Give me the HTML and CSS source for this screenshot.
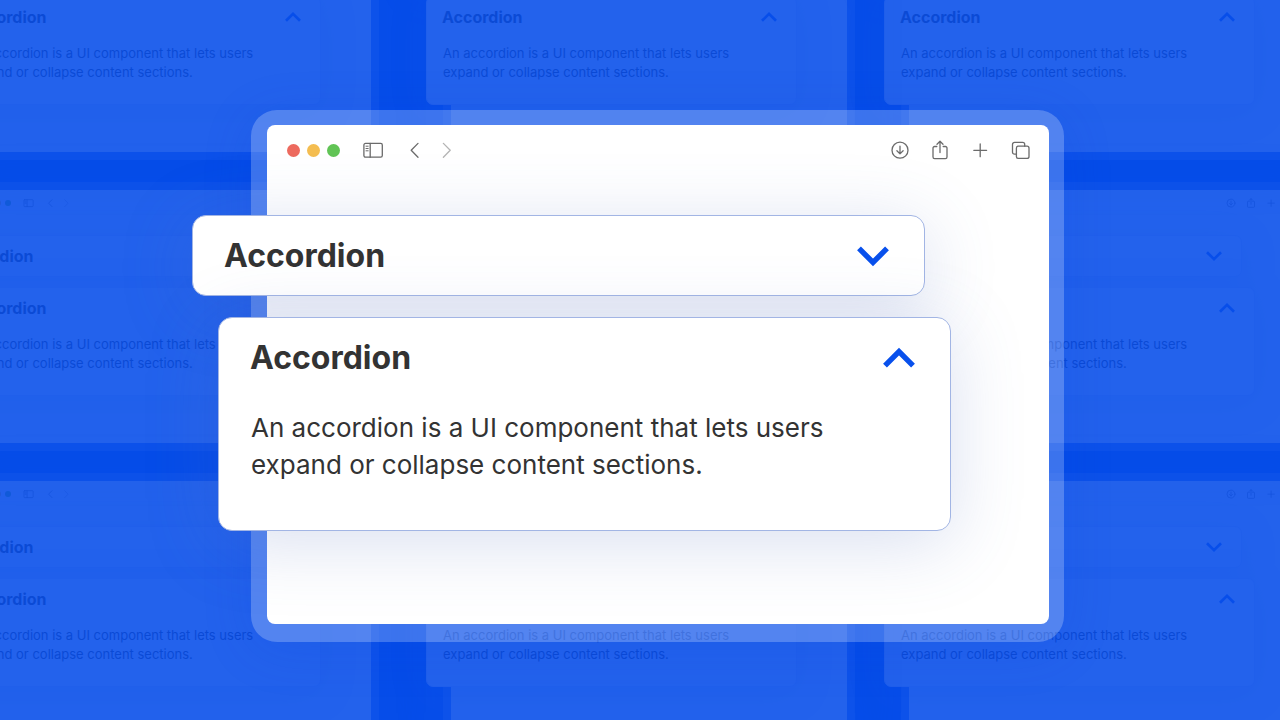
FILE: index.html
```html
<!DOCTYPE html>
<html lang="en">
<head>
  <meta charset="UTF-8" />
  <meta name="viewport" content="width=device-width, initial-scale=1.0"/>
  <title>Accordion</title>
  <link rel="stylesheet" href="styles.css">
</head>
<body>
  <div class="backdrop" id="backdrop" aria-hidden="true" inert></div>

  <main class="stage">
    <div class="frame" id="frame">
      <div class="window">
        <div class="toolbar">
          <div class="lights">
            <span class="light red"></span>
            <span class="light yellow"></span>
            <span class="light green"></span>
          </div>
          <button class="tool" aria-label="Sidebar">
            <svg viewBox="0 0 20 20"><rect x="1.9" y="3.4" width="18.4" height="13.8" rx="1.6"/><path d="M8.2 3.4v13.8"/><path class="thin" d="M4 6.2h2.2M4 8.5h2.2M4 10.8h2.2"/></svg>
          </button>
          <div class="nav">
            <button class="tool" aria-label="Back">
              <svg viewBox="0 0 20 20"><path d="M14 3.4 7.2 10.3l6.8 6.9"/></svg>
            </button>
            <button class="tool faded" aria-label="Forward">
              <svg viewBox="0 0 20 20"><path d="m7.4 3.4 6.8 6.9-6.8 6.9"/></svg>
            </button>
          </div>
          <div class="actions">
            <button class="tool" aria-label="Downloads">
              <svg viewBox="0 0 20 20"><circle cx="10" cy="10.2" r="8"/><path d="M10 6.2v7.6M6.9 10.8l3.1 3.1 3.1-3.1"/></svg>
            </button>
            <button class="tool" aria-label="Share">
              <svg viewBox="0 0 20 20"><path d="M6.8 6.5H4.6A1.6 1.6 0 0 0 3 8.1V17a1.6 1.6 0 0 0 1.6 1.6h10.8A1.6 1.6 0 0 0 17 17V8.1a1.6 1.6 0 0 0-1.6-1.6h-2.2M10 12.6V1.4M7 4.2l3-3 3 3"/></svg>
            </button>
            <button class="tool" aria-label="New tab">
              <svg viewBox="0 0 20 20"><path d="M10.2 3.9v12.8M3.8 10.3h12.8"/></svg>
            </button>
            <button class="tool" aria-label="Tab overview">
              <svg viewBox="0 0 20 20"><rect x="6.4" y="6.2" width="12.6" height="12.2" rx="2"/><path d="M6.4 14.2H4.5a2 2 0 0 1-2-2V4.4a2 2 0 0 1 2-2h8.2a2 2 0 0 1 2 2v1.8"/></svg>
            </button>
          </div>
        </div>

        <div class="stack">
          <section class="card">
            <button class="card-head" aria-expanded="false">
              Accordion
              <svg class="chevron" viewBox="0 0 32 20"><path d="M2 2.4 16 16.4 30 2.4"/></svg>
            </button>
          </section>
          <section class="card open">
            <button class="card-head" aria-expanded="true">
              Accordion
              <svg class="chevron" viewBox="0 0 32 20"><path d="M2 17.6 16 3.6 30 17.6"/></svg>
            </button>
            <p class="card-body">An accordion is a UI component that lets users expand or collapse content sections.</p>
          </section>
        </div>
      </div>
    </div>
  </main>

  <script>
    // fill the backdrop with small copies of the window (3 x 3, the middle cell stays empty)
    const backdrop = document.getElementById("backdrop");
    const frame = document.getElementById("frame");

    for (let i = 0; i < 9; i++) {
      const cell = document.createElement("div");
      cell.className = "cell";
      if (i !== 4) {
        const copy = frame.cloneNode(true);
        copy.removeAttribute("id");
        copy.classList.add("small");
        cell.appendChild(copy);
      }
      backdrop.appendChild(cell);
    }

    document.querySelectorAll(".stage .card-head").forEach(head => {
      head.addEventListener("click", () => {
        const body = head.nextElementSibling;
        if (!body) return;
        body.hidden = !body.hidden;
        head.setAttribute("aria-expanded", String(!body.hidden));
      });
    });
  </script>
</body>
</html>
```
FILE: styles.css
```css
:root {
  --blue: #074eea;
  --text: #333;
}

* {
  box-sizing: border-box;
}

body {
  margin: 0;
  min-height: 100vh;
  position: relative;
  overflow: hidden;
  background: var(--blue);
  color: var(--text);
  font-family: Inter, "Liberation Sans", sans-serif;
}

button {
  margin: 0;
  padding: 0;
  border: none;
  background: none;
  color: inherit;
  font: inherit;
  cursor: pointer;
}

/* backdrop */
.backdrop {
  position: absolute;
  inset: 0;
  display: grid;
  grid-template-columns: 448px 430px 412px;
  row-gap: 22px;
  column-gap: 28px;
  justify-content: center;
  align-content: center;
  padding-bottom: 88px;
  overflow: hidden;
}

.cell {
  opacity: 0.11;
}

/* main layout */
.stage {
  position: relative;
  min-height: 100vh;
  display: flex;
  align-items: center;
  justify-content: center;
  padding: 32px 0 0 35px;
}

.frame {
  --dot: 13px;
  --dot-gap: 7px;
  --icon: 20px;
  --icon-gap: 20px;
  --tool-gap: 22px;
  --nav-gap: 12px;
  --bar-height: 50px;
  --bar-pad: 20px;
  --radius: 8px;
  --card-width: 733px;
  --card-radius: 14px;
  --card-pad: 32px;
  --head-height: 79px;
  --title-size: 32px;
  --text-size: 26px;
  --line: 37px;
  --border: #a2b5e4;
  width: 100%;
  max-width: 813px;
  padding: 15px 15px 18px 16px;
  border-radius: 26px;
  background: rgba(255, 255, 255, 0.22);
  box-shadow: 0 8px 50px rgba(0, 60, 220, 0.15);
}

.window {
  background: #fff;
  border-radius: var(--radius);
}

.toolbar {
  display: flex;
  align-items: center;
  gap: var(--tool-gap);
  height: var(--bar-height);
  padding: 0 calc(var(--bar-pad) - 1px) 0 var(--bar-pad);
}

.lights {
  display: flex;
  gap: var(--dot-gap);
}

.light {
  width: var(--dot);
  height: var(--dot);
  border-radius: 50%;
}

.red { background: #ed6a5e; }
.yellow { background: #f4bd50; }
.green { background: #61c455; }

.nav {
  display: flex;
  gap: var(--nav-gap);
}

.actions {
  display: flex;
  gap: var(--icon-gap);
  margin-left: auto;
}

.tool {
  width: var(--icon);
  height: var(--icon);
}

.tool svg {
  display: block;
  width: 100%;
  height: 100%;
  overflow: visible;
  fill: none;
  stroke: #6b6b6b;
  stroke-width: 1.3;
  stroke-linecap: round;
  stroke-linejoin: round;
}

.tool .thin {
  stroke-width: 1;
}

.faded {
  opacity: 0.5;
}

/* accordion cards */
.stack {
  display: flex;
  flex-direction: column;
  gap: 21px;
  margin-left: -75px;
  padding: 40px 0 93px;
}

.card {
  width: var(--card-width);
  background: #fff;
  border: 1px solid var(--border);
  border-radius: var(--card-radius);
  box-shadow: 0 12px 72px rgba(80, 110, 185, 0.22);
}

.card.open {
  margin-left: 26px;
}

.card-head {
  display: flex;
  align-items: center;
  justify-content: space-between;
  width: 100%;
  height: var(--head-height);
  padding: 0 calc(var(--card-pad) + 3px) 0 calc(var(--card-pad) - 1px);
  font-size: var(--title-size);
  font-weight: 700;
}

.chevron {
  width: 32px;
  height: 20px;
  overflow: visible;
  fill: none;
  stroke: #0850ec;
  stroke-width: 5.4;
}

.card-body {
  margin: 0;
  padding: 12px 100px 47px var(--card-pad);
  font-size: var(--text-size);
  line-height: var(--line);
}

/* half-size window for the backdrop */
.small {
  --dot: 6px;
  --dot-gap: 4px;
  --icon: 10px;
  --icon-gap: 10px;
  --tool-gap: 12px;
  --nav-gap: 6px;
  --bar-height: 26px;
  --bar-pad: 10px;
  --radius: 4px;
  --card-width: 371px;
  --card-radius: 7px;
  --card-pad: 16px;
  --head-height: 40px;
  --title-size: 16px;
  --text-size: 13px;
  --line: 19px;
  --border: #e4eafa;
  width: 412px;
  padding: 8px;
  border-radius: 13px;
}

.small .stack {
  gap: 10px;
  margin-left: -38px;
  padding: 19px 0 47px;
}

.small .card {
  box-shadow: 0 6px 36px rgba(80, 110, 185, 0.2);
}

.small .card.open {
  margin-left: 13px;
}

.small .chevron {
  width: 16px;
  height: 10px;
}

.small .card-body {
  padding: 7px 50px 22px var(--card-pad);
}
```
